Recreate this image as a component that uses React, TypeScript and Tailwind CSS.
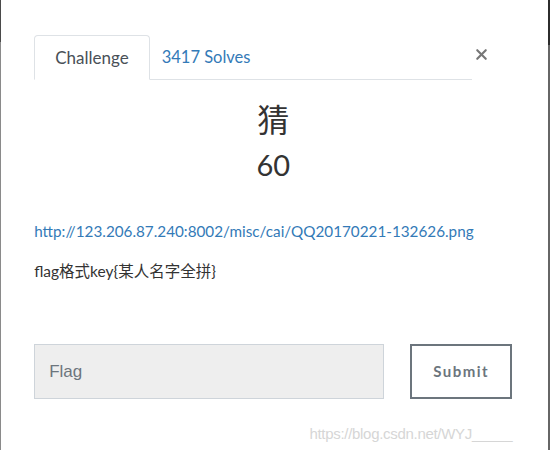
import { X } from 'lucide-react';

export default function App() {
  return (
    <div className="flex w-[550px] h-[450px] overflow-hidden bg-white font-['Lato','Noto_Sans_CJK_SC',sans-serif]">
      <div className="w-[2px] flex flex-col">
        <div className="h-[42px] bg-[#4a4a4a]" />
        <div className="flex-1 bg-[#8a8a8a]" />
      </div>

      <div className="flex-1 flex flex-col pl-[33px] pr-[36px] pt-[35px]">
        {/* tabs */}
        <div className="flex items-start">
          <div className="flex-1 flex border-b border-[#dee2e6]">
            <div className="h-[45px] px-[20px] flex items-center text-[17px] text-[#495057] border border-[#dee2e6] border-b-white -mb-px rounded-t-[4px] bg-white">
              Challenge
            </div>
            <div className="h-[44px] px-[12px] flex items-center text-[16.5px] text-[#337ab7]">
              3417 Solves
            </div>
          </div>
          <button className="w-[40px] h-[30px] flex items-center justify-start pl-[1px] mt-[4px] text-[#777]">
            <X className="w-[17px] h-[17px]" strokeWidth={3} />
          </button>
        </div>

        {/* title */}
        <div className="flex flex-col items-center mt-[20px] text-[#333]">
          <h2 className="text-[32px] leading-[40px]">猜</h2>
          <h3 className="text-[29px] leading-[36px] mt-[7px]">60</h3>
        </div>

        <div className="mt-[38px] text-[15.25px] text-[#337ab7] leading-[20px]">
          http://123.206.87.240:8002/misc/cai/QQ20170221-132626.png
        </div>
        <div className="mt-[20px] text-[15.5px] text-[#333] leading-[20px]">
          flag格式key{'{'}某人名字全拼{'}'}
        </div>

        {/* form */}
        <div className="flex items-center mt-[63px] gap-[26px]">
          <div className="w-[350px] h-[55px] bg-[#eeeeee] border border-[#ced4da] flex items-center px-[14px] text-[17px] text-[#6c757d] font-['Liberation_Sans',sans-serif]">
            Flag
          </div>
          <button className="w-[102px] h-[55px] border-2 border-[#6c757d] text-[#6c757d] text-[15px] font-bold tracking-[1.5px]">
            Submit
          </button>
        </div>

        <div className="flex justify-end mt-[24px]">
          <span className="text-[15px] text-[#d6d6d6] font-['Liberation_Sans',sans-serif] tracking-[-0.3px]">
            https://blog.csdn.net/WYJ_____
          </span>
        </div>
      </div>

      <div className="w-[3px] flex flex-col">
        <div className="h-[45px] bg-[#2c2c2c]" />
        <div className="flex-1 bg-[#666]" />
      </div>
    </div>
  );
}
